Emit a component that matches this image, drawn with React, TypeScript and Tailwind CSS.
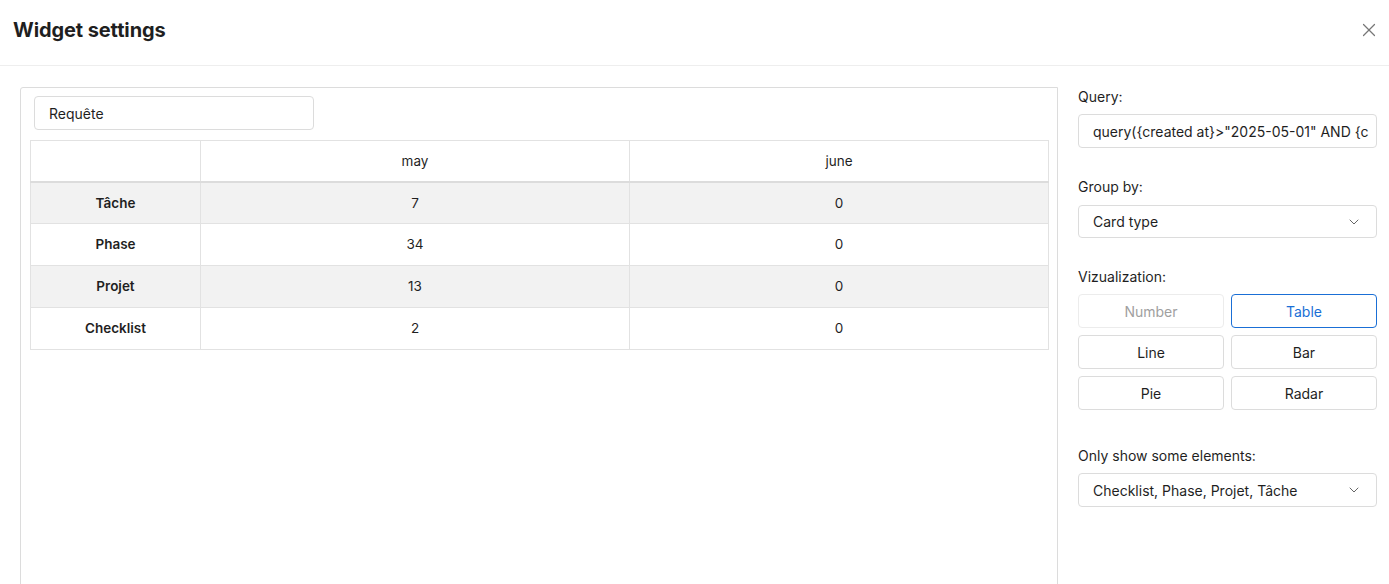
import { ChevronDown, X } from 'lucide-react'
import clsx from 'clsx'

const ROWS = [
  { label: 'Tâche',     may: 7,  june: 0 },
  { label: 'Phase',     may: 34, june: 0 },
  { label: 'Projet',    may: 13, june: 0 },
  { label: 'Checklist', may: 2,  june: 0 },
]

const VIZ = ['Number', 'Table', 'Line', 'Bar', 'Pie', 'Radar']

export default function App() {
  return (
    <div className="h-[584px] overflow-hidden bg-white text-[#1f1f1f] font-['Inter',sans-serif]">
      {/* Header */}
      <div className="h-[66px] flex items-center justify-between pl-[13px] pr-[9px] pb-[6px] border-b border-[#eeeeee]">
        <h1 className="text-[20px] font-bold tracking-[-0.1px]">Widget settings</h1>
        <X size={22} strokeWidth={1.3} className="text-[#777]" />
      </div>

      <div className="flex gap-[20px] pl-[20px] pr-[12px] pt-[21px]">
        {/* Preview */}
        <div className="w-[1038px] h-[520px] border border-[#dcdcdc] rounded-tl-[3px] pt-[8px] px-[9px]">
          <div className="ml-[4px] w-[280px] h-[34px] border border-[#dcdcdc] rounded-[4px] flex items-center px-[14px] text-[14px]">
            Requête
          </div>
          <table className="mt-[10px] w-[1019px] border-collapse border border-[#e2e2e2] text-[13.5px]">
            <thead>
              <tr className="h-[41px] border-b-2 border-[#dcdcdc]">
                <th className="w-[170px] border-r border-[#e2e2e2]" />
                <th className="w-[429px] font-normal border-r border-[#e2e2e2]">may</th>
                <th className="font-normal">june</th>
              </tr>
            </thead>
            <tbody>
              {ROWS.map((r, i) => (
                <tr key={r.label} className={clsx('h-[42px] border-t border-[#e2e2e2]', i % 2 === 0 && 'bg-[#f2f2f2]')}>
                  <td className="text-center font-semibold border-r border-[#e2e2e2]">{r.label}</td>
                  <td className="text-center border-r border-[#e2e2e2]">{r.may}</td>
                  <td className="text-center">{r.june}</td>
                </tr>
              ))}
            </tbody>
          </table>
        </div>

        {/* Settings */}
        <div className="w-[299px] text-[14px]">
          <p className="leading-[20px]">Query:</p>
          <div className="mt-[7px] h-[34px] border border-[#dcdcdc] rounded-[4px] flex items-center pl-[14px] overflow-hidden">
            <span className="block overflow-hidden whitespace-nowrap">
              query({'{'}created at{'}'}&gt;"2025-05-01" AND {'{'}c
            </span>
          </div>

          <p className="mt-[29px] leading-[20px]">Group by:</p>
          <div className="mt-[8px] h-[33px] border border-[#dcdcdc] rounded-[4px] flex items-center justify-between px-[14px]">
            <span>Card type</span>
            <ChevronDown size={16} strokeWidth={1.5} className="text-[#666]" />
          </div>

          <p className="mt-[29px] leading-[20px]">Vizualization:</p>
          <div className="mt-[7px] grid grid-cols-2 gap-[7px]">
            {VIZ.map(v => (
              <div
                key={v}
                className={clsx(
                  'h-[34px] rounded-[4px] flex items-center justify-center border',
                  v === 'Number' && 'border-[#ececec] text-[#a0a0a0]',
                  v === 'Table' && 'border-[#1a6fd6] text-[#1a6fd6]',
                  v !== 'Number' && v !== 'Table' && 'border-[#dcdcdc]',
                )}
              >
                {v}
              </div>
            ))}
          </div>

          <p className="mt-[36px] leading-[20px]">Only show some elements:</p>
          <div className="mt-[7px] h-[34px] border border-[#dcdcdc] rounded-[4px] flex items-center justify-between px-[14px]">
            <span>Checklist, Phase, Projet, Tâche</span>
            <ChevronDown size={16} strokeWidth={1.5} className="text-[#666]" />
          </div>
        </div>
      </div>
    </div>
  )
}
